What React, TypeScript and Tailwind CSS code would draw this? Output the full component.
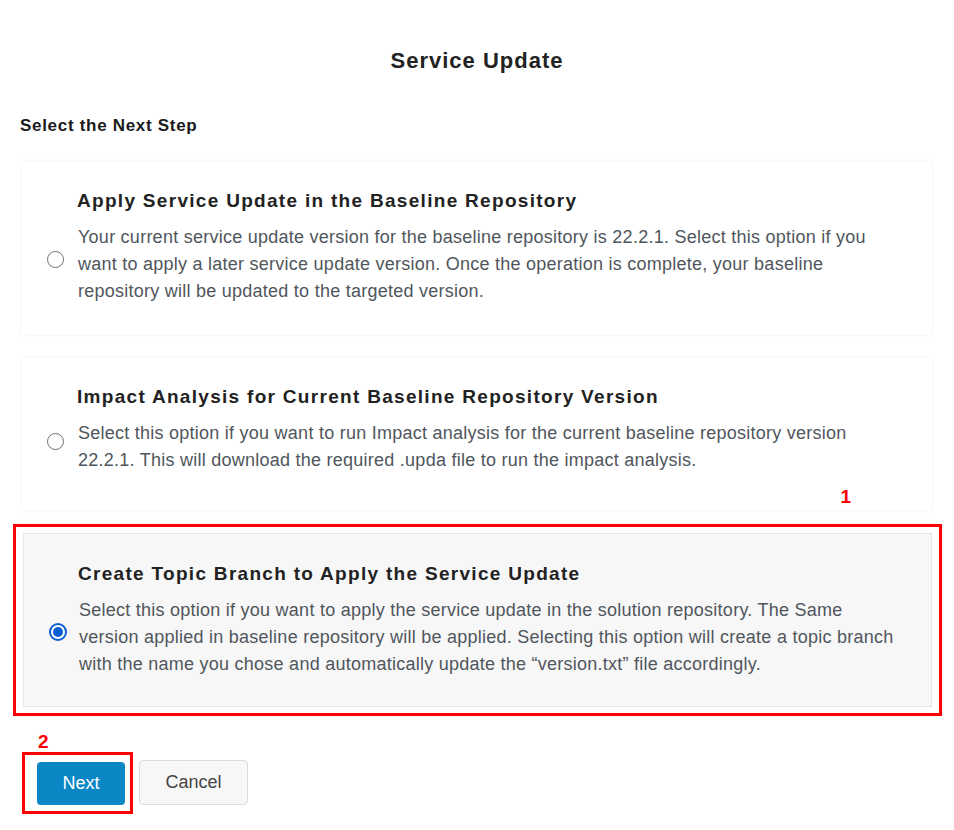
import { useState } from 'react';

type StepOption = {
  id: string;
  title: string;
  description: string;
};

const options: StepOption[] = [
  {
    id: 'baseline',
    title: 'Apply Service Update in the Baseline Repository',
    description:
      'Your current service update version for the baseline repository is 22.2.1. Select this option if you want to apply a later service update version. Once the operation is complete, your baseline repository will be updated to the targeted version.',
  },
  {
    id: 'impact',
    title: 'Impact Analysis for Current Baseline Repository Version',
    description:
      'Select this option if you want to run Impact analysis for the current baseline repository version 22.2.1. This will download the required .upda file to run the impact analysis.',
  },
  {
    id: 'topic',
    title: 'Create Topic Branch to Apply the Service Update',
    description:
      'Select this option if you want to apply the service update in the solution repository. The Same version applied in baseline repository will be applied. Selecting this option will create a topic branch with the name you chose and automatically update the \u201cversion.txt\u201d file accordingly.',
  },
];

function Radio({ checked }: { checked: boolean }) {
  if (checked) {
    return (
      <span className="flex h-[18px] w-[18px] items-center justify-center rounded-full border-2 border-[#0b5fd3] bg-white">
        <span className="h-[10px] w-[10px] rounded-full bg-[#0b5fd3]" />
      </span>
    );
  }
  return <span className="block h-[17px] w-[17px] rounded-full border-[1.5px] border-[#707070] bg-white" />;
}

function OptionCard({
  option,
  checked,
  onSelect,
  bottom,
}: {
  option: StepOption;
  checked: boolean;
  onSelect: () => void;
  bottom: string;
}) {
  return (
    <div
      onClick={onSelect}
      className={
        (checked
          ? 'grid cursor-pointer grid-cols-[54px_1fr] border border-[#e6e6e6] bg-[#f7f7f7] pt-[27px] pr-[29px]'
          : 'grid cursor-pointer grid-cols-[55px_1fr] bg-white pt-[26px] pr-[30px] shadow-[0_0_4px_rgba(0,0,0,0.06)]') +
        ' ' +
        bottom
      }
    >
      <div />
      <h3 className="text-[19px] font-bold leading-[26px] tracking-[1.3px] text-[#222]">{option.title}</h3>
      <div className={checked ? 'flex items-center justify-center pl-[14px]' : 'flex items-center justify-center pl-[12px]'}>
        <Radio checked={checked} />
      </div>
      <p className="mt-[10px] pl-[1px] text-[18px] leading-[27px] tracking-[0.25px] text-[#50565c]">{option.description}</p>
    </div>
  );
}

export default function App() {
  const [selected, setSelected] = useState<string>('topic');

  return (
    <div className="min-h-screen bg-white font-['Liberation_Sans',Arial,sans-serif]">
      <div className="px-[13px] pt-[46px]">
        <h1 className="text-center text-[22px] font-bold leading-[30px] tracking-[1px] text-[#222]">Service Update</h1>

        <h2 className="mt-[37px] pl-[7px] text-[17px] font-bold tracking-[0.7px] text-[#1a1a1a]">Select the Next Step</h2>

        <div className="mt-[23px] flex flex-col">
          <div className="mx-[9px]">
            <OptionCard
              option={options[0]}
              checked={selected === 'baseline'}
              onSelect={() => setSelected('baseline')}
              bottom="pb-[30px]"
            />
          </div>
          <div className="mx-[9px] mt-[23px]">
            <OptionCard
              option={options[1]}
              checked={selected === 'impact'}
              onSelect={() => setSelected('impact')}
              bottom="pb-[36px]"
            />
          </div>

          {/* annotation 1 */}
          <div className="relative">
            <span className="absolute right-[90px] -top-[27px] text-[19px] font-bold text-[#f00]">1</span>
          </div>
          <div className="mt-[14px] w-[929px] border-[3px] border-[#f00] px-[7px] py-[6px]">
            <OptionCard
              option={options[2]}
              checked={selected === 'topic'}
              onSelect={() => setSelected('topic')}
              bottom="pb-[28px]"
            />
          </div>
        </div>

        {/* annotation 2 + buttons */}
        <div className="mt-[16px] pl-[25px] text-[19px] font-bold leading-[20px] text-[#f00]">2</div>
        <div className="flex items-center gap-[6px] pl-[9px]">
          <div className="border-[3px] border-[#f00] pt-[7px] pb-[6px] pl-[12px] pr-[5px]">
            <button className="h-[43px] w-[88px] rounded-[4px] bg-[#0a87c4] text-[18px] text-white">Next</button>
          </div>
          <button className="h-[45px] w-[109px] rounded-[4px] border border-[#dcdcdc] bg-[#f7f7f7] text-[18px] text-[#444]">
            Cancel
          </button>
        </div>
      </div>
    </div>
  );
}
